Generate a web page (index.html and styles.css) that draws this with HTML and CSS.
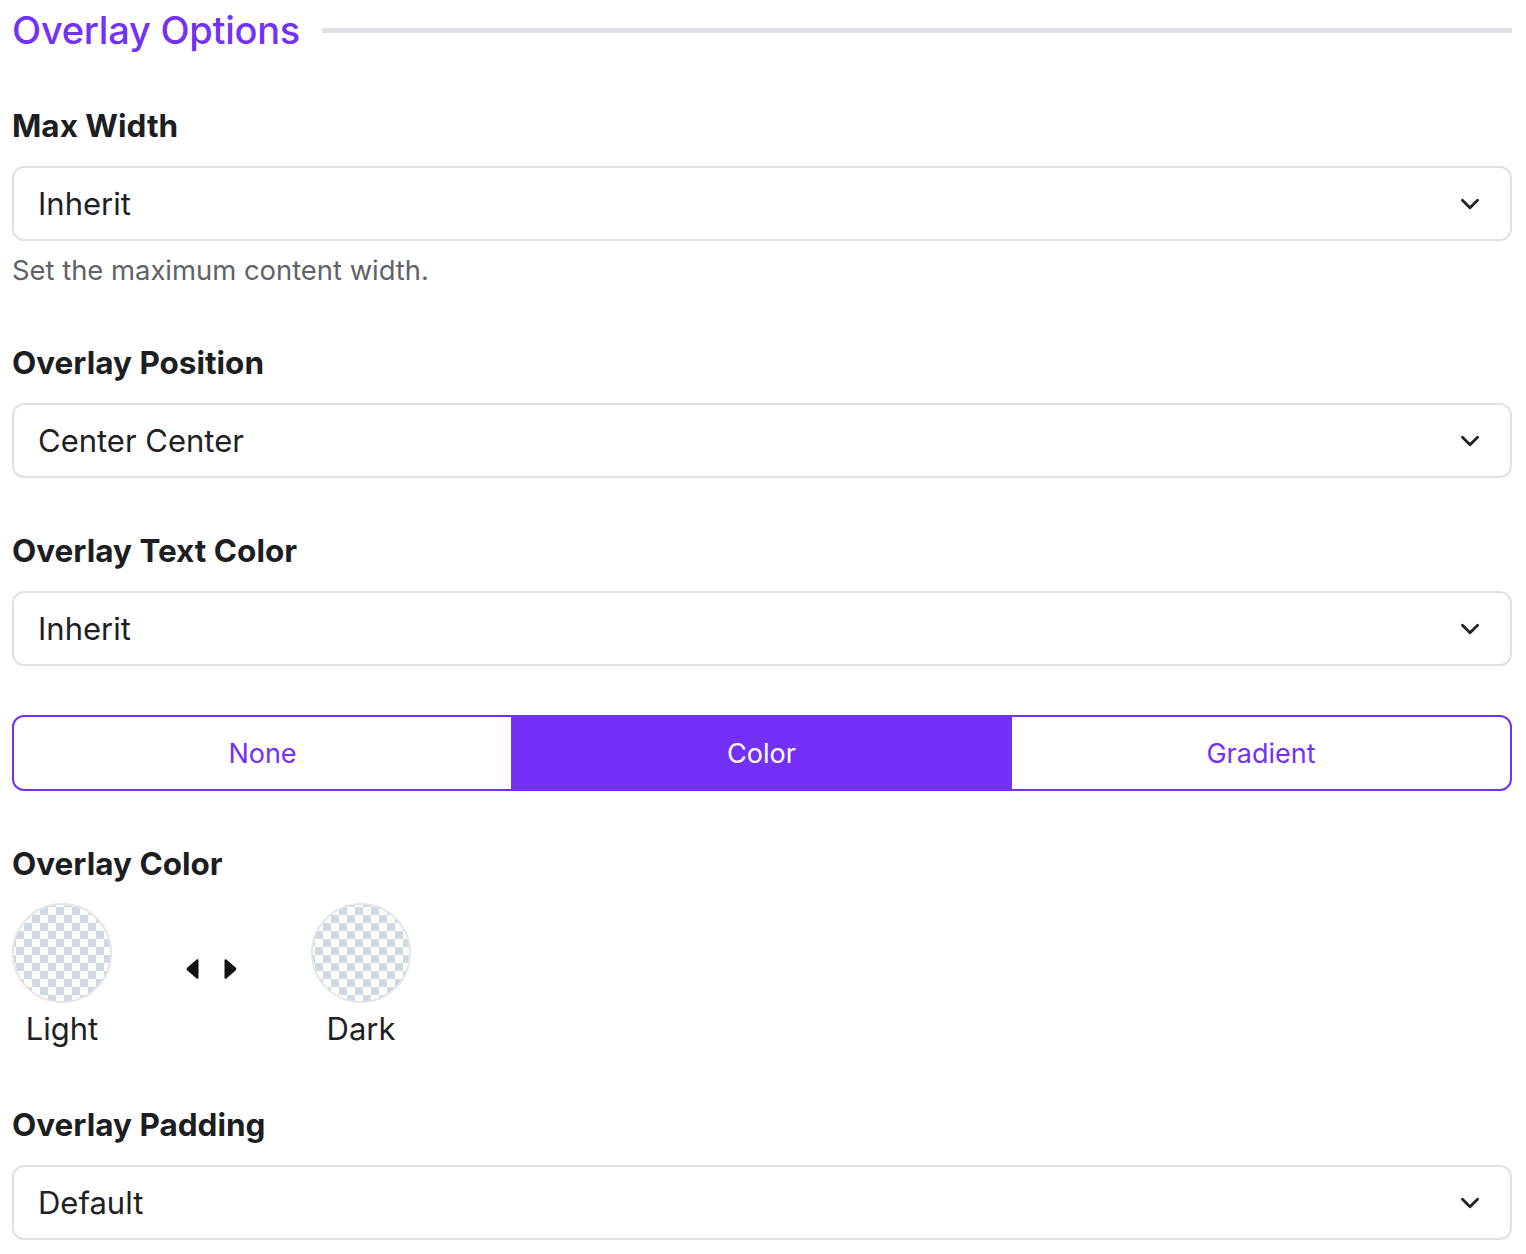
FILE: index.html
```html
<!DOCTYPE html>
<html lang="en">
<head>
<meta charset="utf-8">
<title>Overlay Options</title>
<link rel="stylesheet" href="styles.css">
</head>
<body>
<div class="panel">
  <div class="section-head">
    <h2 class="section-title">Overlay Options</h2>
    <div class="section-rule"></div>
  </div>

  <div class="field field-first">
    <div class="field-label">Max Width</div>
    <div class="select">
      <span class="select-value">Inherit</span>
      <svg class="chevron" viewBox="0 0 24 24" width="26" height="26"><path d="M5 8.5l7 7 7-7" fill="none" stroke="#222327" stroke-width="2.6" stroke-linecap="round" stroke-linejoin="round"/></svg>
    </div>
    <div class="help">Set the maximum content width.</div>
  </div>

  <div class="field field-after-help">
    <div class="field-label">Overlay Position</div>
    <div class="select">
      <span class="select-value">Center Center</span>
      <svg class="chevron" viewBox="0 0 24 24" width="26" height="26"><path d="M5 8.5l7 7 7-7" fill="none" stroke="#222327" stroke-width="2.6" stroke-linecap="round" stroke-linejoin="round"/></svg>
    </div>
  </div>

  <div class="field">
    <div class="field-label">Overlay Text Color</div>
    <div class="select">
      <span class="select-value">Inherit</span>
      <svg class="chevron" viewBox="0 0 24 24" width="26" height="26"><path d="M5 8.5l7 7 7-7" fill="none" stroke="#222327" stroke-width="2.6" stroke-linecap="round" stroke-linejoin="round"/></svg>
    </div>
  </div>

  <div class="segmented">
    <div class="segment">None</div>
    <div class="segment segment-active">Color</div>
    <div class="segment">Gradient</div>
  </div>

  <div class="field field-after-seg">
    <div class="field-label">Overlay Color</div>
    <div class="swatches">
      <div class="swatch">
        <div class="swatch-circle"></div>
        <div class="swatch-name">Light</div>
      </div>
      <div class="swap">
        <svg viewBox="0 0 13 22" width="13" height="22"><path d="M10.6 1.6 C11.8 0.8 12.5 1.4 12.5 2.8 L12.5 19.2 C12.5 20.6 11.8 21.2 10.6 20.4 L1.4 12.4 C0.3 11.5 0.3 10.5 1.4 9.6 Z" fill="#111"/></svg>
        <svg viewBox="0 0 13 22" width="13" height="22"><path d="M2.4 1.6 C1.2 0.8 0.5 1.4 0.5 2.8 L0.5 19.2 C0.5 20.6 1.2 21.2 2.4 20.4 L11.6 12.4 C12.7 11.5 12.7 10.5 11.6 9.6 Z" fill="#111"/></svg>
      </div>
      <div class="swatch">
        <div class="swatch-circle"></div>
        <div class="swatch-name">Dark</div>
      </div>
    </div>
  </div>

  <div class="field field-after-swatch">
    <div class="field-label">Overlay Padding</div>
    <div class="select">
      <span class="select-value">Default</span>
      <svg class="chevron" viewBox="0 0 24 24" width="26" height="26"><path d="M5 8.5l7 7 7-7" fill="none" stroke="#222327" stroke-width="2.6" stroke-linecap="round" stroke-linejoin="round"/></svg>
    </div>
  </div>
</div>
</body>
</html>
```

FILE: styles.css
```css
* { box-sizing: border-box; }

body {
  margin: 0;
  background: #ffffff;
  font-family: Inter, "Noto Sans", "Liberation Sans", sans-serif;
  color: #1d1e22;
}

.panel {
  width: 1512px;
  padding-left: 12px;
}

.section-head {
  display: flex;
  align-items: center;
  height: 60px;
}

.section-title {
  margin: 0;
  font-size: 38px;
  font-weight: 500;
  color: #7332f8;
  letter-spacing: -0.25px;
  line-height: 60px;
  white-space: nowrap;
}

.section-rule {
  flex: 1;
  height: 5px;
  background: #dfe1e6;
  margin-left: 22px;
}

.field { margin-top: 53px; }
.field-first { margin-top: 46px; }
.field-after-help { margin-top: 56px; }
.field-after-seg { margin-top: 53px; }
.field-after-swatch { margin-top: 56px; }

.field-label {
  font-size: 31.5px;
  font-weight: 700;
  line-height: 40px;
  height: 40px;
  color: #1d1e22;
  margin-bottom: 20px;
}

.select {
  display: flex;
  align-items: center;
  justify-content: space-between;
  height: 75px;
  border: 2px solid #e0e1e5;
  border-radius: 12px;
  padding: 0 27px 0 24px;
  background: #fff;
}

.select-value {
  font-size: 31px;
  color: #1f2024;
  line-height: 40px;
}

.chevron { display: block; }

.help {
  margin-top: 12px;
  font-size: 27.4px;
  line-height: 34px;
  color: #5f6268;
}

.segmented {
  display: grid;
  grid-template-columns: 497px 501px 1fr;
  margin-top: 49px;
  height: 76px;
  border: 2px solid #7330f9;
  border-radius: 12px;
  overflow: hidden;
}

.segment {
  display: flex;
  align-items: center;
  justify-content: center;
  font-size: 27px;
  color: #7330f9;
}

.segment-active {
  background: #7330f9;
  color: #ffffff;
}

.swatches {
  display: flex;
  align-items: flex-start;
  margin-top: -1px;
}

.swatch {
  display: flex;
  flex-direction: column;
  align-items: center;
  width: 100px;
}

.swatch-circle {
  width: 100px;
  height: 100px;
  border-radius: 50%;
  border: 2px solid #e3e5e9;
  background-color: #ffffff;
  background-image: conic-gradient(#cfd9e1 25%, #ffffff 0 50%, #cfd9e1 0 75%, #ffffff 0);
  background-size: 16px 16px;
  background-position: 2px 2px;
}

.swatch-name {
  margin-top: 6px;
  font-size: 31px;
  line-height: 40px;
  color: #1f2024;
  white-space: nowrap;
}

.swap {
  width: 199px;
  height: 100px;
  display: flex;
  align-items: center;
  justify-content: center;
  gap: 25px;
  padding-top: 32px;
}

.swap svg { display: block; flex: none; }
```
